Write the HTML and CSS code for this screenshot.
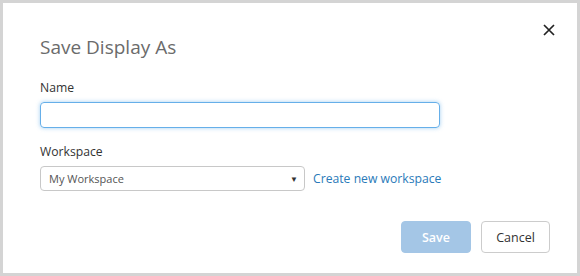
FILE: index.html
```html
<!DOCTYPE html>
<html>
<head>
<meta charset="utf-8">
<link rel="stylesheet" href="styles.css">
</head>
<body>
<div class="dialog">
  <button class="close" aria-label="Close">
    <svg width="12" height="12" viewBox="0 0 12 12"><path d="M1 1 L11 11 M11 1 L1 11" stroke="#222" stroke-width="1.7" fill="none"/></svg>
  </button>
  <h1 class="title">Save Display As</h1>
  <label class="label">Name</label>
  <div class="name-input"></div>
  <label class="label ws-label">Workspace</label>
  <div class="ws-row">
    <div class="select">
      <span>My Workspace</span>
      <span class="arrow">▼</span>
    </div>
    <a class="link">Create new workspace</a>
  </div>
  <div class="footer">
    <button class="btn save">Save</button>
    <button class="btn cancel">Cancel</button>
  </div>
</div>
</body>
</html>
```
FILE: styles.css
```css
* { box-sizing: border-box; }
html, body { margin: 0; padding: 0; }
body {
  background: #d4d4d4;
  width: 580px;
  height: 276px;
  padding: 3px;
  font-family: "Open Sans", "Noto Sans", sans-serif;
}
.dialog {
  position: relative;
  background: #fff;
  width: 574px;
  height: 270px;
  padding: 31px 0 0 37px;
  display: flex;
  flex-direction: column;
}
.close {
  position: absolute;
  top: 19px;
  right: 20px;
  width: 16px;
  height: 16px;
  padding: 2px;
  border: 0;
  background: none;
  display: flex;
}
.title {
  margin: 0;
  font-size: 19px;
  font-weight: 400;
  color: #6b6b6b;
  line-height: 26px;
}
.label {
  font-size: 12.2px;
  color: #333;
  line-height: 16px;
  margin-top: 20px;
}
.name-input {
  margin-top: 6px;
  width: 400px;
  height: 26px;
  border: 1px solid #66afe9;
  border-radius: 4px;
  box-shadow: 0 0 4px rgba(102, 175, 233, 0.6);
}
.ws-label { margin-top: 16px; }
.ws-row {
  margin-top: 6px;
  display: flex;
  align-items: center;
  gap: 8px;
}
.select {
  width: 265px;
  height: 25px;
  border: 1px solid #c8c8c8;
  border-radius: 4px;
  display: flex;
  align-items: center;
  justify-content: space-between;
  padding: 0 6px 0 8px;
  font-size: 11px;
  color: #555;
}
.arrow { font-size: 8px; color: #333; }
.link {
  font-size: 12.2px;
  color: #2a7ab9;
}
.footer {
  margin-top: 30px;
  display: flex;
  justify-content: flex-end;
  gap: 10px;
  padding-right: 27px;
}
.btn {
  height: 32px;
  border-radius: 4px;
  font-family: inherit;
  font-size: 12.5px;
}
.save {
  width: 70px;
  background: #a4c6e6;
  border: 1px solid #a4c6e6;
  color: #fff;
  font-weight: 600;
}
.cancel {
  width: 69px;
  background: #fff;
  border: 1px solid #ccc;
  color: #333;
}
```
